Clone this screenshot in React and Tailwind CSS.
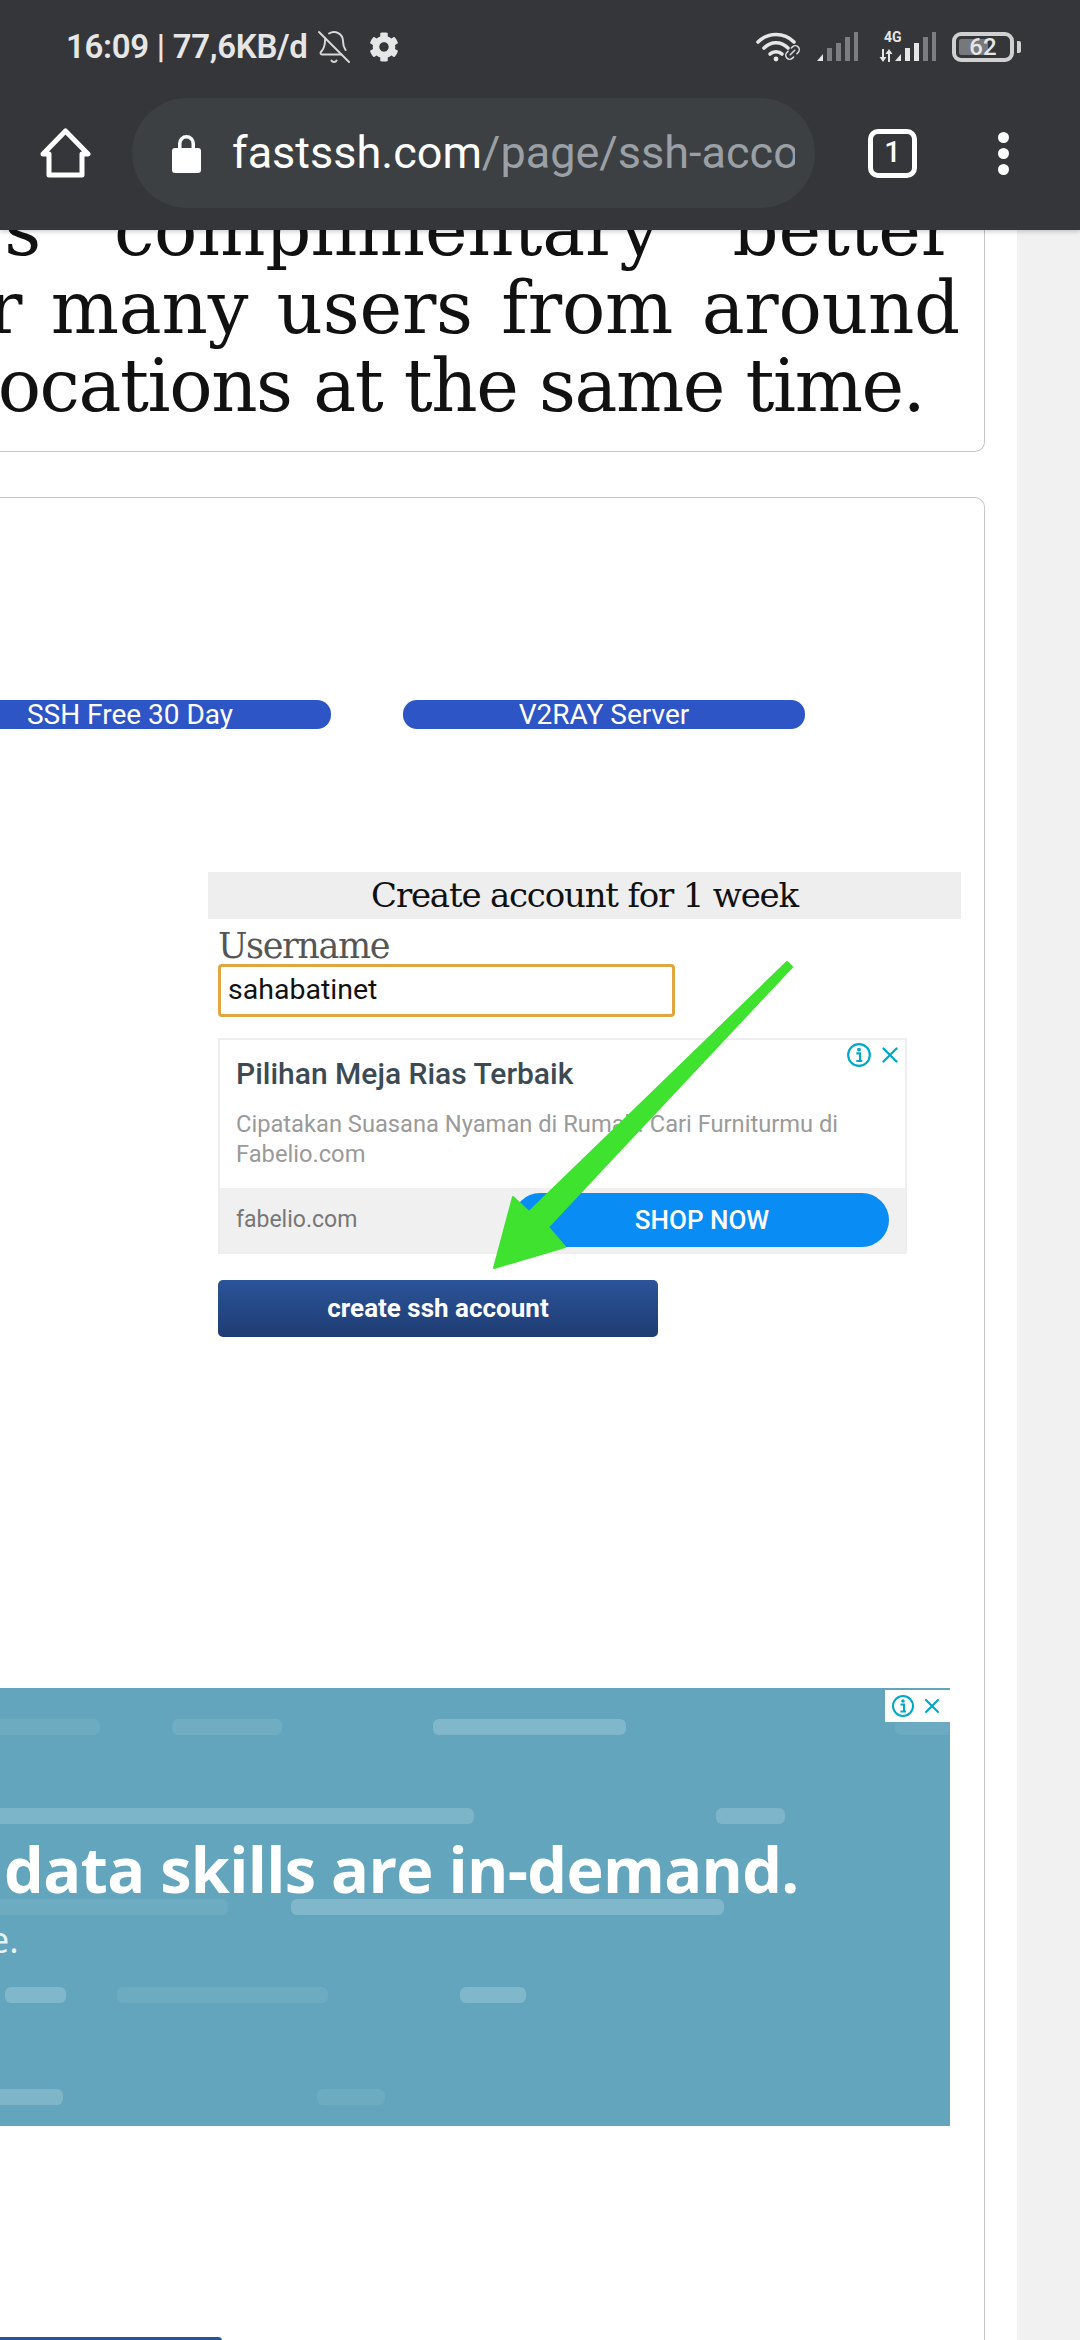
import { BellOff, Link2, X } from "lucide-react";
import { FaCog } from "react-icons/fa";

const serif = "font-['DejaVu_Serif',serif]";
const roboto = "font-['Roboto',sans-serif]";

// faded stripes behind the banner copy: x, y, width, opacity
const stripes = [
  [-10, 1718, 110, 0.07],
  [172, 1718, 110, 0.09],
  [433, 1718, 193, 0.2],
  [895, 1718, 70, 0.06],
  [-10, 1807, 484, 0.17],
  [716, 1807, 69, 0.18],
  [-10, 1898, 238, 0.07],
  [291, 1898, 433, 0.2],
  [5, 1986, 61, 0.2],
  [117, 1986, 211, 0.07],
  [460, 1986, 66, 0.2],
  [-10, 2088, 73, 0.18],
  [317, 2088, 68, 0.07],
];

function Signal({ lit }) {
  const bars = [
    [0, 22],
    [10, 16],
    [19, 11],
    [28, 5],
    [37, 0],
  ];
  return (
    <svg width="41" height="30" viewBox="0 0 41 30">
      <path d="M0 29 L6 22 V29 Z" fill={lit > 0 ? "#e6e6e6" : "#7c7d80"} />
      {bars.slice(1).map(([x, y], i) => (
        <rect key={x} x={x} y={y} width="5" height={29 - y} fill={i + 1 < lit ? "#e6e6e6" : "#7c7d80"} />
      ))}
    </svg>
  );
}

function WifiIcon() {
  return (
    <div className="relative w-[46px] h-[30px]">
      <svg width="40" height="30" viewBox="0 0 40 30" fill="none" stroke="#e6e6e6" strokeWidth="3.6" strokeLinecap="round">
        <path d="M2 10 C12 0 28 0 38 10" />
        <path d="M8 16 C15 9 25 9 32 16" />
        <path d="M14 22 C17 19 23 19 26 22" />
        <circle cx="20" cy="27" r="2.4" fill="#e6e6e6" stroke="none" />
      </svg>
      <Link2 className="absolute right-0 bottom-0 text-[#d8d8d8] -rotate-45" size={19} strokeWidth={2} />
    </div>
  );
}

function AdChoices({ size = 26 }) {
  return (
    <div className="flex items-center gap-[5px] text-[#00a9c9]">
      <svg width={size} height={size} viewBox="0 0 24 24" fill="none" stroke="currentColor">
        <circle cx="12" cy="12" r="10" strokeWidth="2" />
        <circle cx="12" cy="7" r="1.8" fill="currentColor" stroke="none" />
        <path d="M9.5 10.5 H13 V17 M9.5 17.5 H15" strokeWidth="2" />
      </svg>
      <X size={size} strokeWidth={2.2} />
    </div>
  );
}

function Header() {
  return (
    <header className="relative z-10 h-[230px] bg-[#35363a] shadow-[0_2px_4px_rgba(0,0,0,0.18)]">
      <div className={`h-[94px] flex items-center pl-[66px] text-[#e6e6e6] ${roboto}`}>
        <span className="text-[33px] font-semibold tracking-[-0.3px]">16:09 | 77,6KB/d</span>
        <BellOff className="ml-[8px] text-[#d8d8d8]" size={36} strokeWidth={1.3} />
        <FaCog className="ml-[17px] text-[#e6e6e6]" size={30} />
        <div className="ml-auto flex items-center mr-[66px]">
          <WifiIcon />
          <div className="ml-[15px]"><Signal lit={1} /></div>
          <div className="relative ml-[21px] w-[57px] h-[30px] flex justify-end">
            <span className="absolute left-[5px] -top-[3px] text-[14px] font-bold leading-[16px]">4G</span>
            <svg className="absolute left-0 bottom-0" width="14" height="13" viewBox="0 0 14 13" fill="#e6e6e6">
              <path d="M3 0 H5 V8 H7.5 L4 13 L0.5 8 H3 Z" />
              <path d="M9 13 H11 V5 H13.5 L10 0 L6.5 5 H9 Z" />
            </svg>
            <Signal lit={3} />
          </div>
          <div className="relative ml-[16px] w-[62px] h-[30px] border-[4px] border-[#d0d0d0] rounded-[9px] flex items-center justify-center">
            <div className="absolute left-[3px] top-[3px] bottom-[3px] w-[29px] bg-[#77787b] rounded-[2px]"></div>
            <span className="relative text-[24px] font-medium leading-none">62</span>
            <div className="absolute -right-[11px] top-[5px] w-[4px] h-[12px] rounded-r-[2px] bg-[#d0d0d0]"></div>
          </div>
        </div>
      </div>
      <div className="mt-[4px] h-[110px] flex items-center">
        <svg className="ml-[40px]" width="51" height="50" viewBox="0 0 51 50" fill="none" stroke="#fff" strokeWidth="5" strokeLinejoin="round" strokeLinecap="round">
          <path d="M3 26 L25.5 3 L48 26 H42 V47 H9 V26 Z" />
        </svg>
        <div className="ml-[41px] w-[683px] h-[110px] rounded-[55px] bg-[#3c4043] flex items-center pl-[40px] pr-[20px]">
          <svg width="29" height="39" viewBox="0 0 29 39" fill="#fff">
            <path d="M6 15 V9.5 a8.5 8.5 0 0 1 17 0 V15 h-3.5 V9.5 a5 5 0 0 0 -10 0 V15 Z" />
            <rect x="0" y="14" width="29" height="25" rx="3" />
          </svg>
          <div className={`ml-[31px] overflow-hidden whitespace-nowrap text-[45px] leading-[60px] w-[563px] ${roboto}`}>
            <span className="text-white">fastssh.com</span>
            <span className="text-[#9aa0a6]">/page/ssh-account</span>
          </div>
        </div>
        <div className={`ml-[53px] w-[49px] h-[49px] border-[5px] border-white rounded-[10px] flex items-center justify-center text-white text-[29px] font-medium ${roboto}`}>1</div>
        <div className="ml-[81px] flex flex-col gap-[5px]">
          <span className="w-[11px] h-[11px] rounded-full bg-white"></span>
          <span className="w-[11px] h-[11px] rounded-full bg-white"></span>
          <span className="w-[11px] h-[11px] rounded-full bg-white"></span>
        </div>
      </div>
    </header>
  );
}

function ArticleEnd() {
  const text = `text-[72px] leading-[78px] text-[#111] whitespace-nowrap ${serif}`;
  return (
    <section className="-ml-[12px] w-[997px] h-[222px] border-r-[1.5px] border-b-[1.5px] border-[#c8c8c8] rounded-br-[10px] overflow-hidden">
      <div className={`-mt-[39px] pl-[12px] ${text}`}>
        <div className="w-[985px] -ml-[30px] flex justify-between tracking-[-0.2px]">
          <span>rs</span><span>complimentary</span><span>better</span>
        </div>
        <div className="w-[972px] -ml-[12px] flex justify-between tracking-[-0.2px]">
          <span>r</span><span>many</span><span>users</span><span>from</span><span>around</span>
        </div>
        <div className="-ml-[24px] tracking-[-1.4px]">locations at the same time.</div>
      </div>
    </section>
  );
}

function CreateForm() {
  return (
    <div className="ml-[208px] w-[753px] mt-[143px]">
      <div className={`h-[47px] bg-[#eeeeee] flex items-center justify-center text-[34px] text-[#111] tracking-[-1.2px] ${serif}`}>
        Create account for 1 week
      </div>
      <div className="pl-[10px]">
        <div className={`h-[45px] pt-[5px] text-[35px] leading-[44px] text-[#555] tracking-[-1.4px] ${serif}`}>Username</div>
        <div className={`w-[457px] h-[53px] border-[3px] border-[#e0a63f] rounded-[4px] flex items-center pl-[7px] text-[28.5px] text-[#111] ${roboto}`}>
          sahabatinet
        </div>
        <div className={`relative mt-[21px] w-[689px] h-[216px] border-[2px] border-[#eeeeee] flex flex-col ${roboto}`}>
          <div className="absolute right-[2px] top-[2px]"><AdChoices /></div>
          <div className="flex-1 pl-[16px] pt-[16px]">
            <div className="text-[30px] leading-[36px] font-medium text-[#3c4a54]">Pilihan Meja Rias Terbaik</div>
            <div className="mt-[17px] text-[23.7px] leading-[30px] text-[#9a9a9a]">
              Cipatakan Suasana Nyaman di Rumah. Cari Furniturmu di<br />Fabelio.com
            </div>
          </div>
          <div className="h-[64px] bg-[#f0f0f0] flex items-center pl-[16px] pr-[16px] justify-between">
            <span className="text-[23px] text-[#777]">fabelio.com</span>
            <span className="w-[376px] h-[54px] rounded-[27px] bg-[#0a8cf5] flex items-center justify-center text-white text-[26px] font-medium pl-[2px]">SHOP NOW</span>
          </div>
        </div>
        <div className={`mt-[26px] w-[440px] h-[57px] rounded-[5px] bg-gradient-to-b from-[#2c5499] to-[#1e3c72] flex items-center justify-center text-white text-[26px] font-bold ${roboto}`}>
          create ssh account
        </div>
      </div>
    </div>
  );
}

function Banner() {
  return (
    <div className="relative mt-[351px] w-[950px] h-[438px] bg-[#62a5bd] overflow-hidden">
      <svg className="absolute inset-0" width="950" height="438" viewBox="0 0 950 438">
        {stripes.map(([x, y, w, o]) => (
          <rect key={x + "-" + y} x={x} y={y - 1687} width={w} height="16" rx="6" fill="#fff" opacity={o} />
        ))}
      </svg>
      <div className="absolute left-[4px] top-[146px] text-[63px] leading-[70px] font-bold text-white whitespace-nowrap tracking-[-0.7px] font-['Open_Sans',sans-serif]">
        data skills are in-demand.
      </div>
      <div className="absolute -left-[11px] top-[232px] text-[36px] leading-[40px] text-white/85 font-['Open_Sans',sans-serif]">e.</div>
      <div className="absolute right-0 top-[2px] w-[65px] h-[32px] bg-white flex items-center justify-center">
        <AdChoices size={24} />
      </div>
    </div>
  );
}

function AccountCard() {
  return (
    <section className="-ml-[12px] mt-[45px] w-[997px] h-[1900px] border-t-[1.5px] border-r-[1.5px] border-[#c8c8c8] rounded-tr-[10px] pl-[12px] overflow-hidden">
      <div className={`pt-[202px] -ml-[71px] flex gap-[72px] text-white text-[28px] ${roboto}`}>
        <div className="w-[402px] h-[29px] rounded-[14px] bg-[#2d55c5] flex items-center justify-center">SSH Free 30 Day</div>
        <div className="w-[402px] h-[29px] rounded-[14px] bg-[#2d55c5] flex items-center justify-center">V2RAY Server</div>
      </div>
      <CreateForm />
      <Banner />
      <div className="mt-[211px] w-[222px] h-[10px] bg-[#2a5298] rounded-tr-[4px]"></div>
    </section>
  );
}

export default function App() {
  return (
    <div className="relative w-[1080px] h-[2340px] overflow-hidden bg-[#f1f1f1]">
      <Header />
      <main className="w-[1017px] h-[2110px] bg-white">
        <ArticleEnd />
        <AccountCard />
      </main>
      {/* green annotation arrow drawn over the screenshot */}
      <svg className="absolute left-0 top-0 pointer-events-none" width="1080" height="2340" viewBox="0 0 1080 2340">
        <path d="M787 962 L792 967 L548 1227 L565 1247 L494 1268 L513 1197 L529 1212 Z" fill="#3fe22f" stroke="#3fe22f" strokeWidth="2" strokeLinejoin="round" />
      </svg>
    </div>
  );
}
